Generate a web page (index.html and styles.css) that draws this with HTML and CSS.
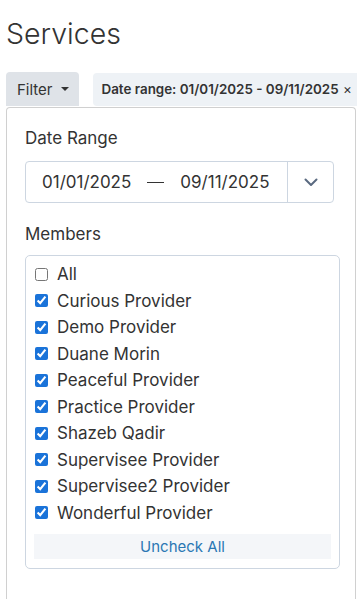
FILE: index.html
```html
<!DOCTYPE html>
<html>
  <head>
    <meta charset="UTF-8">
    <title>Services</title>
    <link rel="stylesheet" href="styles.css">
  </head>
  <body>
    <h1 class="page-title">Services</h1>

    <div class="toolbar">
      <button class="filter-btn">Filter <span class="caret"></span></button>
      <div class="chip">Date range: 01/01/2025 - 09/11/2025 <span class="chip-x">&times;</span></div>
    </div>

    <div class="filter-panel">
      <div class="field-label">Date Range</div>
      <div class="date-input">
        <span class="date-from">01/01/2025</span>
        <span class="date-dash"></span>
        <span class="date-to">09/11/2025</span>
        <span class="date-toggle">
          <svg width="14" height="9" viewBox="0 0 14 9"><path d="M1.5 1.5 L7 7 L12.5 1.5" fill="none" stroke="#5a6a80" stroke-width="2" stroke-linecap="round" stroke-linejoin="round"/></svg>
        </span>
      </div>

      <div class="field-label members-label">Members</div>
      <div class="members-box">
        <label class="member"><input type="checkbox"> All</label>
        <label class="member"><input type="checkbox" checked> Curious Provider</label>
        <label class="member"><input type="checkbox" checked> Demo Provider</label>
        <label class="member"><input type="checkbox" checked> Duane Morin</label>
        <label class="member"><input type="checkbox" checked> Peaceful Provider</label>
        <label class="member"><input type="checkbox" checked> Practice Provider</label>
        <label class="member"><input type="checkbox" checked> Shazeb Qadir</label>
        <label class="member"><input type="checkbox" checked> Supervisee Provider</label>
        <label class="member"><input type="checkbox" checked> Supervisee2 Provider</label>
        <label class="member"><input type="checkbox" checked> Wonderful Provider</label>
        <button class="uncheck-btn">Uncheck All</button>
      </div>
    </div>
  </body>
</html>
```

FILE: styles.css
```css
body {
  margin: 0;
  padding: 0 6px;
  font-family: Inter, "Liberation Sans", sans-serif;
  color: #333;
  overflow: hidden;
}

.page-title {
  margin: 14px 0 0 0;
  font-size: 28.5px;
  font-weight: 300;
  line-height: 40px;
  color: #333;
}

.toolbar {
  display: flex;
  align-items: center;
  gap: 14px;
  margin-top: 18px;
  white-space: nowrap;
}

.filter-btn {
  display: flex;
  align-items: center;
  gap: 8px;
  height: 34px;
  padding: 0 10px 0 11px;
  border: none;
  border-radius: 4px 4px 0 0;
  background-color: #dfe3e8;
  font-family: inherit;
  font-size: 15px;
  color: #333;
}

.caret {
  width: 0;
  height: 0;
  border-left: 4px solid transparent;
  border-right: 4px solid transparent;
  border-top: 4px solid #333;
}

.chip {
  height: 33px;
  line-height: 33px;
  padding: 0 9px;
  border-radius: 4px;
  background-color: #eef2f6;
  font-size: 13.4px;
  font-weight: 600;
  color: #333;
}

.chip-x {
  font-weight: 400;
  margin-left: 1px;
}

.filter-panel {
  width: 350px;
  height: 492px;
  margin-top: 1px;
  padding: 18px 0 0 18px;
  box-sizing: border-box;
  border: 1px solid #d0d0d0;
  border-bottom: none;
  border-radius: 4px 4px 0 0;
}

.field-label {
  font-size: 17px;
  line-height: 24px;
}

.date-input {
  display: flex;
  align-items: center;
  width: 309px;
  height: 42px;
  margin-top: 11px;
  box-sizing: border-box;
  border: 1px solid #cdd6e1;
  border-radius: 4px;
  font-size: 17px;
}

.date-from {
  margin-left: 16px;
}

.date-dash {
  width: 17px;
  height: 1px;
  background-color: #333;
  margin: 0 16px 0 16px;
}

.date-toggle {
  display: flex;
  align-items: center;
  justify-content: center;
  width: 45px;
  height: 100%;
  margin-left: auto;
  border-left: 1px solid #cdd6e1;
}

.members-label {
  margin-top: 19px;
}

.members-box {
  width: 315px;
  margin-top: 9px;
  padding: 5px 8px 9px 8px;
  box-sizing: border-box;
  border: 1px solid #cdd6e1;
  border-radius: 5px;
}

.member {
  display: flex;
  align-items: center;
  height: 26.5px;
  font-size: 17px;
}

.member input {
  width: 13px;
  height: 13px;
  margin: 0 9px 0 1px;
  accent-color: #1a73d9;
}

.uncheck-btn {
  display: block;
  width: 100%;
  height: 25px;
  margin-top: 8px;
  border: none;
  background-color: #f4f6f9;
  font-family: inherit;
  font-size: 15px;
  color: #2b78b4;
}
```
